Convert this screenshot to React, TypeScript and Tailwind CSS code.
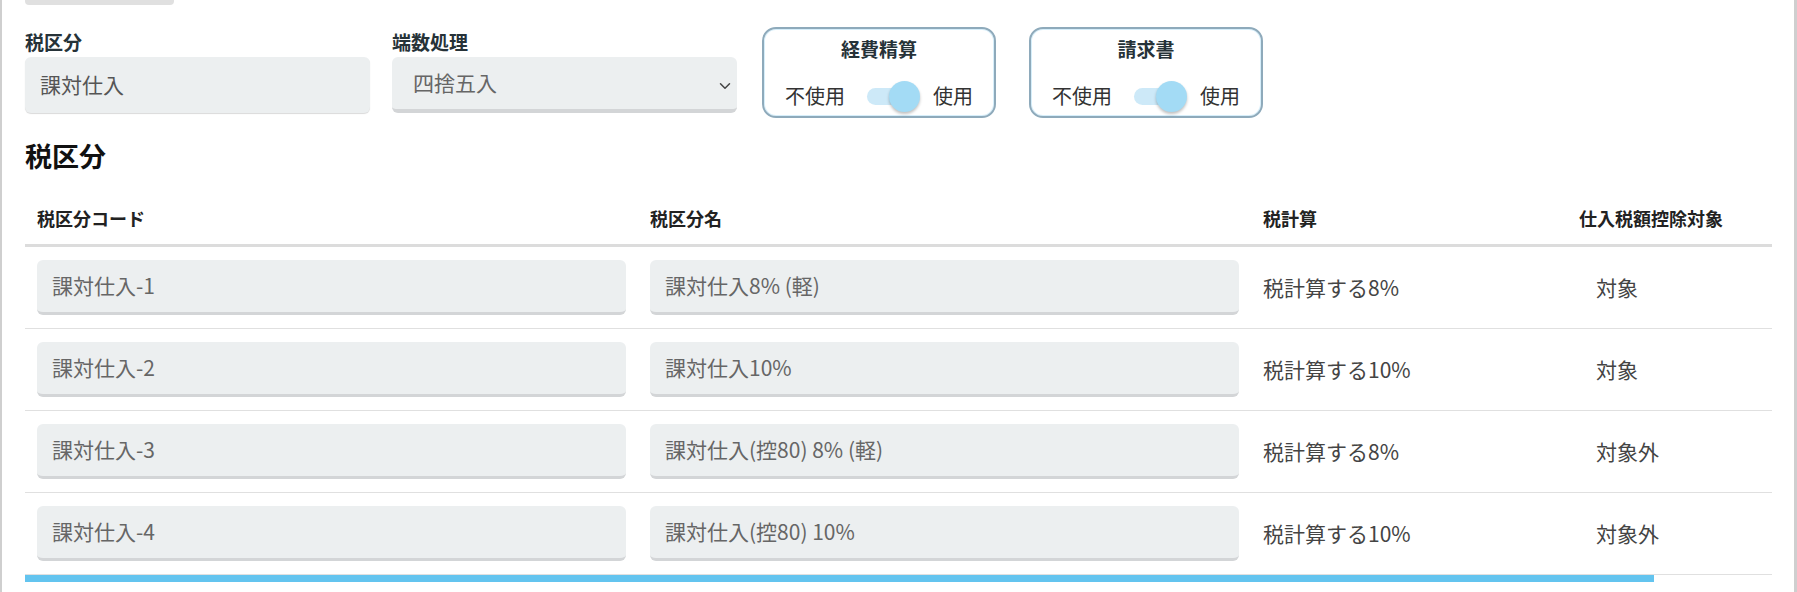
import { ChevronDown } from 'lucide-react';

const rows = [
  { code: '課対仕入-1', name: '課対仕入8% (軽)', calc: '税計算する8%', target: '対象' },
  { code: '課対仕入-2', name: '課対仕入10%', calc: '税計算する10%', target: '対象' },
  { code: '課対仕入-3', name: '課対仕入(控80) 8% (軽)', calc: '税計算する8%', target: '対象外' },
  { code: '課対仕入-4', name: '課対仕入(控80) 10%', calc: '税計算する10%', target: '対象外' },
];

function ToggleCard({ title }: { title: string }) {
  return (
    <div className="w-[234px] h-[91px] rounded-[14px] border-2 border-[#8eaabb] shadow-[inset_0_0_0_1px_#d6eefa] flex flex-col items-center">
      <div className="pt-[6px] leading-[28px] text-[19px] font-bold text-[#263238]">{title}</div>
      <div className="mt-[16px] h-[34px] flex items-center text-[20px] text-[#333]">
        <span>不使用</span>
        <div className="relative ml-[22px] w-[53px] h-[31px]">
          <div className="absolute left-0 top-[7px] w-[46px] h-[17px] rounded-full bg-[#cde9f8]" />
          <div className="absolute right-0 top-0 w-[31px] h-[31px] rounded-full bg-[#a3dbf5] shadow-[0_2px_3px_rgba(0,0,0,0.25)]" />
        </div>
        <span className="ml-[13px]">使用</span>
      </div>
    </div>
  );
}

export default function App() {
  return (
    <div
      className="min-h-screen bg-white border-l-2 border-r-[3px] border-[#cfcfcf] pl-[23px] pr-[22px]"
      style={{ fontFamily: '"Noto Sans CJK JP", "Noto Sans", sans-serif' }}
    >
      {/* button above (cut off) */}
      <div className="w-[149px] h-[5px] bg-[#e0e0e0] rounded-b-[4px]" />

      {/* settings row */}
      <div className="mt-[22px] flex items-start">
        <div className="w-[345px]">
          <div className="h-[30px] leading-[30px] text-[19px] font-bold text-[#263238]">税区分</div>
          <div className="h-[56px] rounded-[6px] bg-[#eceff0] shadow-[0_1px_1px_rgba(0,0,0,0.15)] flex items-center px-[15px] text-[21px] text-[#555]">
            課対仕入
          </div>
        </div>
        <div className="w-[345px] ml-[22px]">
          <div className="h-[30px] leading-[30px] text-[19px] font-bold text-[#263238]">端数処理</div>
          <div className="h-[56px] rounded-[6px] bg-[#eceff0] border-b-[4px] border-[#d3d5d7] flex items-center justify-between pl-[21px] pr-[3px] text-[21px] text-[#666]">
            <span>四捨五入</span>
            <ChevronDown size={18} strokeWidth={2} className="text-[#444] translate-y-[3px]" />
          </div>
        </div>
        <div className="ml-[25px]">
          <ToggleCard title="経費精算" />
        </div>
        <div className="ml-[33px]">
          <ToggleCard title="請求書" />
        </div>
      </div>

      {/* section title */}
      <h2 className="mt-[20px] leading-[36px] text-[27px] font-bold text-[#111]">税区分</h2>

      {/* table */}
      <div className="mt-[19px]">
        <div className="grid grid-cols-[613px_613px_316px_1fr] h-[54px] items-center border-b-[3px] border-[#dcdcdc] text-[18px] font-bold text-[#222]">
          <div className="px-[12px]">税区分コード</div>
          <div className="px-[12px]">税区分名</div>
          <div className="px-[12px]">税計算</div>
          <div className="px-[12px]">仕入税額控除対象</div>
        </div>
        {rows.map((r) => (
          <div
            key={r.code}
            className="grid grid-cols-[613px_613px_316px_1fr] h-[82px] items-center border-b border-[#e0e0e0] text-[21px]"
          >
            <div className="px-[12px]">
              <div className="h-[55px] rounded-[6px] bg-[#eceff0] border-b-[3px] border-[#d3d5d7] flex items-center px-[15px] text-[#666]">
                {r.code}
              </div>
            </div>
            <div className="px-[12px]">
              <div className="h-[55px] rounded-[6px] bg-[#eceff0] border-b-[3px] border-[#d3d5d7] flex items-center px-[15px] text-[#666]">
                {r.name}
              </div>
            </div>
            <div className="px-[12px] text-[#444]">{r.calc}</div>
            <div className="pl-[29px] text-[#444]">{r.target}</div>
          </div>
        ))}
        <div className="w-[1629px] h-[7px] bg-[#63c4ef]" />
      </div>
    </div>
  );
}
